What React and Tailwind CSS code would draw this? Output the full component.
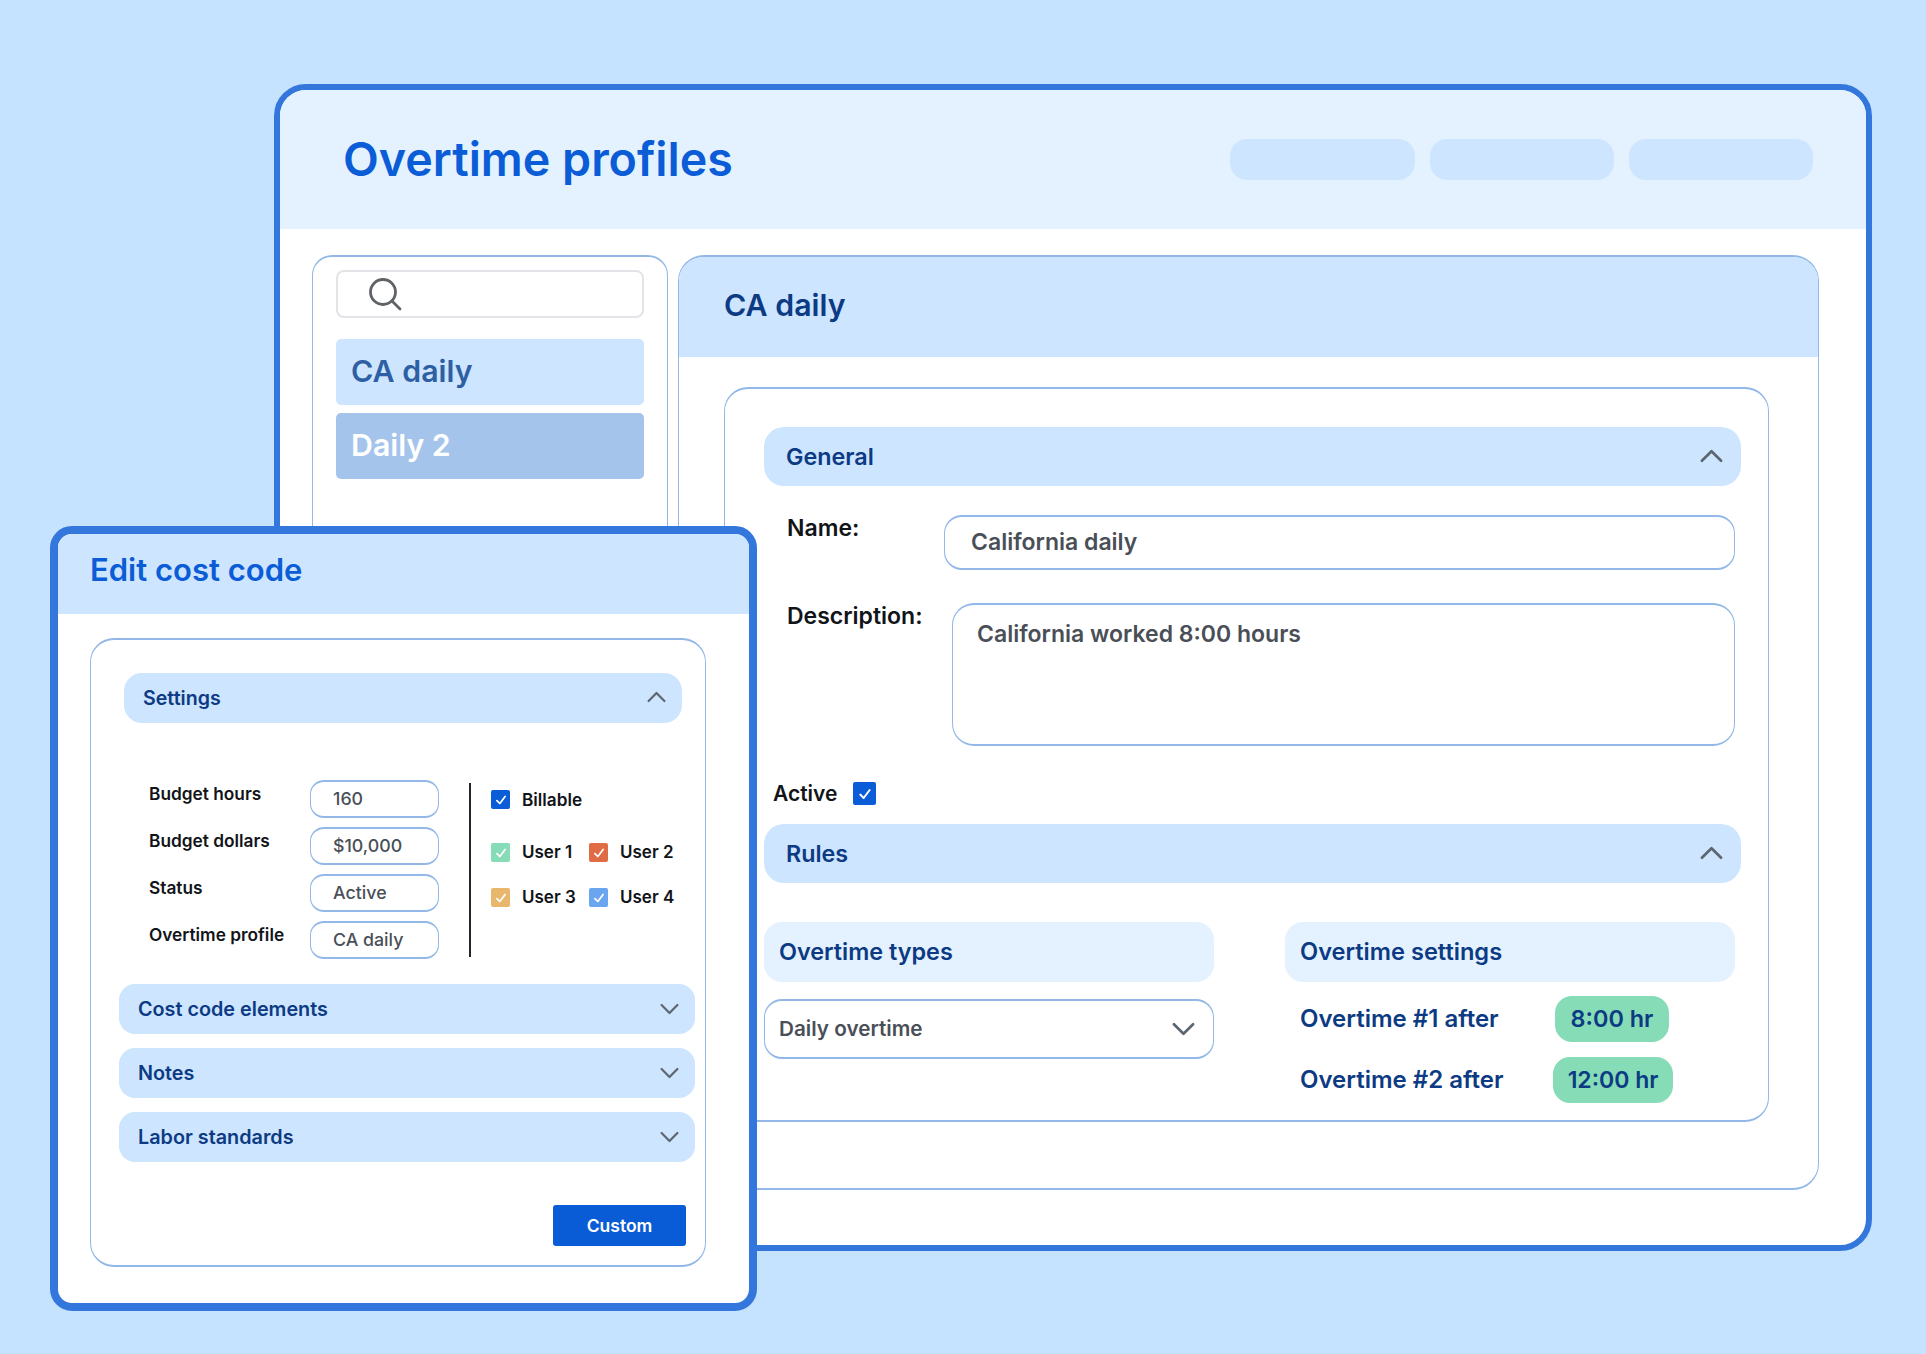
const font = { fontFamily: '"Inter", "Noto Sans", sans-serif' };

const Chevron = ({ up, className }) => (
    <svg viewBox="0 0 24 14" className={className} fill="none" stroke="#5c6670" strokeWidth="2.8" strokeLinecap="round" strokeLinejoin="round">
        {up ? <polyline points="2,12 12,2 22,12" /> : <polyline points="2,2 12,12 22,2" />}
    </svg>
);

const Check = ({ className }) => (
    <svg viewBox="0 0 12 12" className={className} fill="none" stroke="#ffffff" strokeWidth="1.5" strokeLinecap="round" strokeLinejoin="round">
        <polyline points="2.5,6.5 5,9 9.5,3" />
    </svg>
);

const SearchIcon = () => (
    <svg viewBox="0 0 34 34" className="w-[34px] h-[34px]" fill="none" stroke="#5f6368" strokeWidth="2.8" strokeLinecap="round">
        <circle cx="15" cy="15" r="12.5" />
        <line x1="24" y1="24" x2="32" y2="32" />
    </svg>
);

const UserCheck = ({ color, label, width }) => (
    <div className={`flex items-center h-[19px] ${width}`}>
        <span className={`flex items-center justify-center w-[19px] h-[19px] rounded-[2px] ${color}`}>
            <Check className="w-[14px] h-[14px]" />
        </span>
        <span className="ml-[12px] text-[17px] font-semibold text-[#111418]">{label}</span>
    </div>
);

const BudgetRow = ({ label, value }) => (
    <div className="flex h-[38px]">
        <span className="w-[161px] text-[17.3px] font-semibold text-[#111418] leading-[27px]">{label}</span>
        <div className="flex items-center w-[129px] h-[38px] pl-[22px] border-x border-y-2 border-[#93b8e8] rounded-[14px] text-[17.8px] font-medium text-[#4a4f57]">{value}</div>
    </div>
);

const SmallBar = ({ label }) => (
    <div className="flex items-center justify-between w-[576px] h-[50px] pl-[19px] pr-[16px] bg-[#cde5ff] rounded-[16px]">
        <span className="pt-[1px] text-[19.8px] font-semibold text-[#0c3a83]">{label}</span>
        <Chevron className="w-[19px] h-[12px]" />
    </div>
);

const SectionBar = ({ label }) => (
    <div className="flex items-center justify-between w-[977px] h-[59px] pl-[22px] pr-[18px] bg-[#cde5ff] rounded-[20px]">
        <span className="pt-[1px] text-[23.3px] font-semibold text-[#0c3a83]">{label}</span>
        <Chevron up className="w-[23px] h-[14px] mb-[2px]" />
    </div>
);

const App = () => {
    return (
        <div className="relative w-[1926px] h-[1354px] bg-[#c5e3ff] overflow-hidden" style={font}>
            {/* main window */}
            <div className="absolute left-[274px] top-[84px] w-[1598px] h-[1167px] bg-white border-[6px] border-[#3477dc] rounded-[32px] overflow-hidden">
                <div className="flex items-center justify-between h-[139px] pl-[63px] pr-[53px] bg-[#e4f2ff]">
                    <h1 className="text-[46.6px] font-semibold text-[#0b5cd7]">Overtime profiles</h1>
                    <div className="flex gap-[15px]">
                        <div className="w-[185px] h-[41px] bg-[#cde5ff] rounded-[17px]" />
                        <div className="w-[184px] h-[41px] bg-[#cde5ff] rounded-[17px]" />
                        <div className="w-[184px] h-[41px] bg-[#cde5ff] rounded-[17px]" />
                    </div>
                </div>
                <div className="flex gap-[10px] pl-[32px] pt-[26px]">
                    <div className="w-[356px] h-[935px] pt-[13px] px-[23px] border-x border-y-2 border-[#93b8e8] rounded-[20px]">
                        <div className="flex items-center h-[48px] pl-[30px] border-2 border-[#e2e4e8] rounded-[8px]">
                            <SearchIcon />
                        </div>
                        <div className="flex items-center h-[66px] mt-[21px] pl-[15px] bg-[#cde5ff] rounded-[5px] text-[30.3px] font-semibold text-[#2f5fa3]">CA daily</div>
                        <div className="flex items-center h-[66px] mt-[8px] pl-[15px] bg-[#a5c4ec] rounded-[5px] text-[30.3px] font-semibold text-white">Daily 2</div>
                    </div>
                    <div className="w-[1141px] h-[935px] border-x border-y-2 border-[#93b8e8] rounded-[26px] overflow-hidden">
                        <div className="flex items-center h-[100px] pl-[45px] pb-[2px] bg-[#cde5ff] text-[30.3px] font-semibold text-[#0c3a83]">CA daily</div>
                        <div className="w-[1045px] h-[735px] mt-[30px] ml-[45px] pt-[38px] pl-[39px] border-x border-y-2 border-[#93b8e8] rounded-[24px]">
                            <SectionBar label="General" />
                            <div className="flex mt-[29px]">
                                <span className="w-[180px] pl-[23px] text-[23px] font-semibold text-[#111418] leading-[26px]">Name:</span>
                                <div className="flex items-center w-[791px] h-[55px] pl-[26px] border-x border-y-2 border-[#93b8e8] rounded-[18px] text-[23px] font-semibold text-[#4a4f57]">California daily</div>
                            </div>
                            <div className="flex mt-[33px]">
                                <span className="w-[188px] pl-[23px] text-[23px] font-semibold text-[#111418] leading-[26px]">Description:</span>
                                <div className="w-[783px] h-[143px] pl-[24px] pt-[12px] border-x border-y-2 border-[#93b8e8] rounded-[22px] text-[23px] font-semibold text-[#4a4f57]">California worked 8:00 hours</div>
                            </div>
                            <div className="flex items-center h-[23px] mt-[36px] pl-[9px]">
                                <span className="w-[80px] text-[21px] font-semibold text-[#111418]">Active</span>
                                <span className="flex items-center justify-center w-[23px] h-[23px] bg-[#0b5cd7] rounded-[2px]">
                                    <Check className="w-[16px] h-[16px]" />
                                </span>
                            </div>
                            <div className="mt-[19px]">
                                <SectionBar label="Rules" />
                            </div>
                            <div className="flex gap-[71px] mt-[39px]">
                                <div className="w-[450px]">
                                    <div className="flex items-center h-[60px] pl-[15px] bg-[#e4f2ff] rounded-[18px] text-[23.4px] font-semibold text-[#0c3a83]">Overtime types</div>
                                    <div className="flex items-center justify-between h-[60px] mt-[17px] pl-[14px] pr-[18px] border-x border-y-2 border-[#93b8e8] rounded-[18px]">
                                        <span className="text-[20.7px] font-semibold text-[#4a4f57]">Daily overtime</span>
                                        <Chevron className="w-[23px] h-[14px]" />
                                    </div>
                                </div>
                                <div className="w-[450px]">
                                    <div className="flex items-center h-[60px] pl-[15px] bg-[#e4f2ff] rounded-[18px] text-[23.6px] font-semibold text-[#0c3a83]">Overtime settings</div>
                                    <div className="flex items-center h-[46px] mt-[14px] pl-[15px]">
                                        <span className="w-[255px] text-[24px] font-semibold text-[#0c3a83]">Overtime #1 after</span>
                                        <span className="flex items-center justify-center w-[114px] h-[46px] bg-[#86dcb6] rounded-[17px] text-[23.4px] font-semibold text-[#0c3a83]">8:00 hr</span>
                                    </div>
                                    <div className="flex items-center h-[46px] mt-[15px] pl-[15px]">
                                        <span className="w-[253px] text-[24px] font-semibold text-[#0c3a83]">Overtime #2 after</span>
                                        <span className="flex items-center justify-center w-[120px] h-[46px] bg-[#86dcb6] rounded-[17px] text-[23px] font-semibold text-[#0c3a83]">12:00 hr</span>
                                    </div>
                                </div>
                            </div>
                        </div>
                    </div>
                </div>
            </div>

            {/* edit window */}
            <div className="absolute left-[50px] top-[526px] w-[707px] h-[785px] bg-white border-8 border-[#3477dc] rounded-[22px] overflow-hidden">
                <div className="flex items-center h-[80px] pl-[32px] pb-[8px] bg-[#cde5ff] text-[31px] font-semibold text-[#0b5cd7]">Edit cost code</div>
                <div className="w-[616px] h-[629px] mt-[24px] ml-[32px] pt-[33px] border-x border-y-2 border-[#93b8e8] rounded-[24px]">
                    <div className="flex items-center justify-between w-[558px] h-[50px] ml-[33px] pl-[19px] pr-[16px] bg-[#cde5ff] rounded-[18px]">
                        <span className="pt-[1px] text-[19.6px] font-semibold text-[#0c3a83]">Settings</span>
                        <Chevron up className="w-[19px] h-[12px] mb-[2px]" />
                    </div>
                    <div className="flex mt-[57px] ml-[58px]">
                        <div className="flex flex-col gap-[9px]">
                            <BudgetRow label="Budget hours" value="160" />
                            <BudgetRow label="Budget dollars" value="$10,000" />
                            <BudgetRow label="Status" value="Active" />
                            <BudgetRow label="Overtime profile" value="CA daily" />
                        </div>
                        <div className="w-[2px] h-[174px] mt-[3px] ml-[30px] bg-[#22262c]" />
                        <div className="ml-[20px] pt-[10px]">
                            <div className="flex items-center h-[19px]">
                                <span className="flex items-center justify-center w-[19px] h-[19px] bg-[#0b5cd7] rounded-[2px]">
                                    <Check className="w-[14px] h-[14px]" />
                                </span>
                                <span className="ml-[12px] text-[17.2px] font-semibold text-[#111418]">Billable</span>
                            </div>
                            <div className="flex mt-[34px]">
                                <UserCheck color="bg-[#86dcb6]" label="User 1" width="w-[98px]" />
                                <UserCheck color="bg-[#e06c45]" label="User 2" width="w-[90px]" />
                            </div>
                            <div className="flex mt-[26px]">
                                <UserCheck color="bg-[#e8b76b]" label="User 3" width="w-[98px]" />
                                <UserCheck color="bg-[#6aa5ef]" label="User 4" width="w-[90px]" />
                            </div>
                        </div>
                    </div>
                    <div className="flex flex-col gap-[14px] mt-[25px] ml-[28px]">
                        <SmallBar label="Cost code elements" />
                        <SmallBar label="Notes" />
                        <SmallBar label="Labor standards" />
                    </div>
                    <div className="flex items-center justify-center w-[133px] h-[41px] mt-[43px] ml-[462px] pt-[1px] bg-[#0a5cd6] rounded-[3px] text-[17.5px] font-semibold text-white">Custom</div>
                </div>
            </div>
        </div>
    );
};

export default App;
